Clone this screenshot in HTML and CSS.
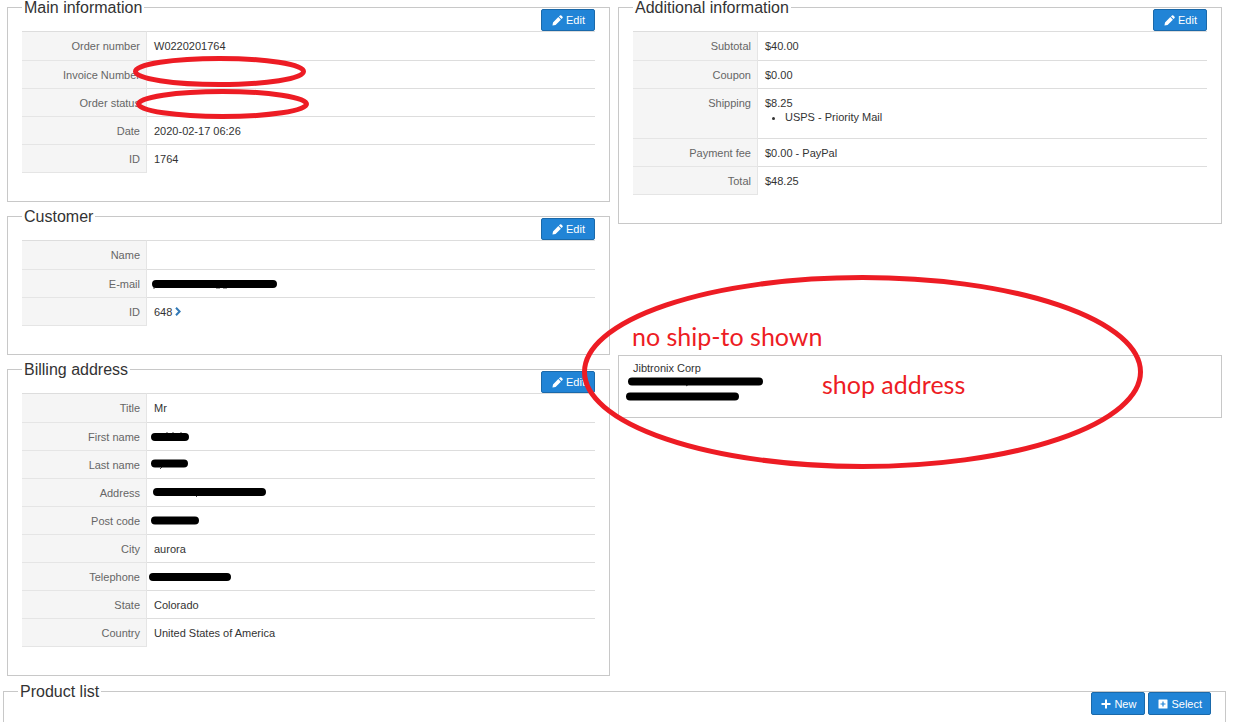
FILE: index.html
```html
<!DOCTYPE html>
<html lang="en">
<head>
<meta charset="utf-8">
<title>Order details</title>
<link rel="stylesheet" href="styles.css">
</head>
<body>
<svg class="sprite" aria-hidden="true">
  <symbol id="pencil" viewBox="0 0 12 12">
    <path d="M0.5 11.5 1.1 8.100 6.900 2.300 9.700 5.100 3.900 10.900ZM7.600 1.600 8.700 .5Q9.500 -.1 10.200 .5L11.500 1.800Q12.100 2.500 11.500 3.300L10.400 4.400Z"/>
  </symbol>
  <symbol id="plus" viewBox="0 0 10 10">
    <path d="M4 .5H6V4H9.500V6H6V9.500H4V6H.5V4H4Z"/>
  </symbol>
  <symbol id="plus-box" viewBox="0 0 10 10">
    <path fill-rule="evenodd" d="M1 .5H9Q9.500 .5 9.500 1V9Q9.500 9.500 9 9.500H1Q.5 9.500 .5 9V1Q.5 .5 1 .5ZM4.400 2.500V4.400H2.500V5.600H4.400V7.500H5.600V5.600H7.500V4.400H5.600V2.500Z"/>
  </symbol>
</svg>
<main class="page">
  <div class="columns">
    <div class="column">
      <section class="panel">
        <header class="panel-head">
          <h2>Main information</h2>
          <button class="btn" type="button"><svg class="icon-pencil"><use href="#pencil"/></svg>Edit</button>
        </header>
        <table class="details">
          <tr><th scope="row">Order number</th><td>W0220201764</td></tr>
          <tr><th scope="row">Invoice Number</th><td></td></tr>
          <tr><th scope="row">Order status</th><td></td></tr>
          <tr><th scope="row">Date</th><td>2020-02-17 06:26</td></tr>
          <tr><th scope="row">ID</th><td>1764</td></tr>
        </table>
      </section>
      <section class="panel">
        <header class="panel-head">
          <h2>Customer</h2>
          <button class="btn" type="button"><svg class="icon-pencil"><use href="#pencil"/></svg>Edit</button>
        </header>
        <table class="details">
          <tr><th scope="row">Name</th><td></td></tr>
          <tr><th scope="row">E-mail</th><td></td></tr>
          <tr><th scope="row">ID</th><td>648 <a class="go" href="#" aria-label="Open customer"><svg viewBox="0 0 6 9"><path d="M1 .8 4.600 4.500 1 8.200"/></svg></a></td></tr>
        </table>
      </section>
      <section class="panel">
        <header class="panel-head">
          <h2>Billing address</h2>
          <button class="btn" type="button"><svg class="icon-pencil"><use href="#pencil"/></svg>Edit</button>
        </header>
        <table class="details">
          <tr><th scope="row">Title</th><td>Mr</td></tr>
          <tr><th scope="row">First name</th><td></td></tr>
          <tr><th scope="row">Last name</th><td></td></tr>
          <tr><th scope="row">Address</th><td></td></tr>
          <tr><th scope="row">Post code</th><td></td></tr>
          <tr><th scope="row">City</th><td>aurora</td></tr>
          <tr><th scope="row">Telephone</th><td></td></tr>
          <tr><th scope="row">State</th><td>Colorado</td></tr>
          <tr><th scope="row">Country</th><td>United States of America</td></tr>
        </table>
      </section>
    </div>
    <div class="column">
      <section class="panel">
        <header class="panel-head">
          <h2>Additional information</h2>
          <button class="btn" type="button"><svg class="icon-pencil"><use href="#pencil"/></svg>Edit</button>
        </header>
        <table class="details">
          <tr><th scope="row">Subtotal</th><td>$40.00</td></tr>
          <tr><th scope="row">Coupon</th><td>$0.00</td></tr>
          <tr><th scope="row">Shipping</th><td>$8.25<ul class="methods"><li>USPS - Priority Mail</li></ul></td></tr>
          <tr><th scope="row">Payment fee</th><td>$0.00 - PayPal</td></tr>
          <tr><th scope="row">Total</th><td>$48.25</td></tr>
        </table>
      </section>
      <address class="shop">Jibtronix Corp</address>
    </div>
  </div>
  <section class="panel products">
    <header class="panel-head">
      <h2>Product list</h2>
      <div class="actions">
        <button class="btn" type="button"><svg class="icon-plus"><use href="#plus"/></svg>New</button>
        <button class="btn" type="button"><svg class="icon-plus"><use href="#plus-box"/></svg>Select</button>
      </div>
    </header>
  </section>
</main>
<svg class="markup" width="1234" height="722" viewBox="0 0 1234 722">
  <g class="remnants">
    <path d="M154 287v2M190 287v1M216 288h4M223 288h4M167 432v2M173 432v1M181 432v1M162 467l-2 2M198 495l-2 2M689 384l-3 2"/>
  </g>
  <g class="redaction">
    <path d="M156 284H273M155 437H185M155 463.500H184M157 492H262M155 520.500H195M153 577H227M632 381.500H759M630 396.500H735"/>
  </g>
  <g class="rings">
    <ellipse cx="219.500" cy="71.500" rx="84" ry="13"/>
    <ellipse cx="222.500" cy="104" rx="84" ry="12.500"/>
    <ellipse cx="862.500" cy="372" rx="278" ry="94.500"/>
  </g>
  <text x="632" y="346">no ship-to shown</text>
  <text x="822" y="394">shop address</text>
</svg>
</body>
</html>
```
FILE: styles.css
```css
* {
  box-sizing: border-box;
}

body {
  position: relative;
  margin: 0;
  background: #fff;
  color: #333;
  font: 11px/14px "Liberation Sans", Arial, sans-serif;
}

.sprite {
  display: none;
}

.page {
  padding: 7px 8px 0 3px;
}

.columns {
  display: grid;
  grid-template-columns: 603fr 604fr;
  gap: 8px;
  padding: 0 4px;
}

.column {
  display: flex;
  flex-direction: column;
  gap: 14px;
}

.panel {
  padding: 0 14px 28px;
  border: 1px solid #c8c8c8;
}

.panel-head {
  display: flex;
  justify-content: space-between;
  align-items: flex-start;
  height: 23px;
}

.panel-head h2 {
  margin: -9px 0 0;
  padding: 0 2px;
  background: #fff;
  font-size: 16px;
  font-weight: normal;
  line-height: 18px;
}

.btn {
  display: flex;
  align-items: center;
  gap: 3px;
  height: 22px;
  margin-top: 1px;
  padding: 0 9px 0 10px;
  border: 1px solid #1a69aa;
  border-radius: 2px;
  background: #2184d6;
  color: #fff;
  font: inherit;
}

.btn svg {
  fill: currentColor;
}

.icon-pencil {
  width: 11px;
  height: 11px;
}

.icon-plus {
  width: 10px;
  height: 10px;
}

.details {
  width: 100%;
  border-spacing: 0;
}

.details th,
.details td {
  padding: 7px 7px 6px;
  border-top: 1px solid #ddd;
  text-align: left;
  vertical-align: top;
}

.details th {
  width: 125px;
  padding-right: 6px;
  border-top-color: #e5e5e5;
  border-right: 1px solid #e5e5e5;
  background: #f5f5f5;
  color: #666;
  font-weight: normal;
  text-align: right;
}

.details tr:first-child > * {
  padding-bottom: 7px;
  border-top-color: #ddd;
}

.details tr:last-child th {
  border-bottom: 1px solid #e5e5e5;
}

.go svg {
  width: 6px;
  height: 9px;
  fill: none;
  stroke: #337ab7;
  stroke-width: 2;
}

.methods {
  margin: 0 0 8px;
  padding-left: 20px;
}

.shop {
  min-height: 63px;
  margin-top: 117px;
  padding: 5px 14px;
  border: 1px solid #c8c8c8;
  font-style: normal;
}

.products {
  margin-top: 15px;
  padding-bottom: 7px;
  border-bottom: 0;
}

.actions {
  display: flex;
  gap: 3px;
}

.actions .btn {
  height: 23px;
  margin-top: 0;
  padding: 0 8px 0 9px;
}

.markup {
  position: absolute;
  top: 0;
  left: 0;
  pointer-events: none;
}

.remnants {
  stroke: #444;
}

.redaction {
  stroke: #000;
  stroke-width: 8;
  stroke-linecap: round;
}

.rings {
  fill: none;
  stroke: #ed1c24;
  stroke-width: 5;
}

.markup text {
  fill: #ed1c24;
  font: 25px Lato, "Open Sans", sans-serif;
}
```
